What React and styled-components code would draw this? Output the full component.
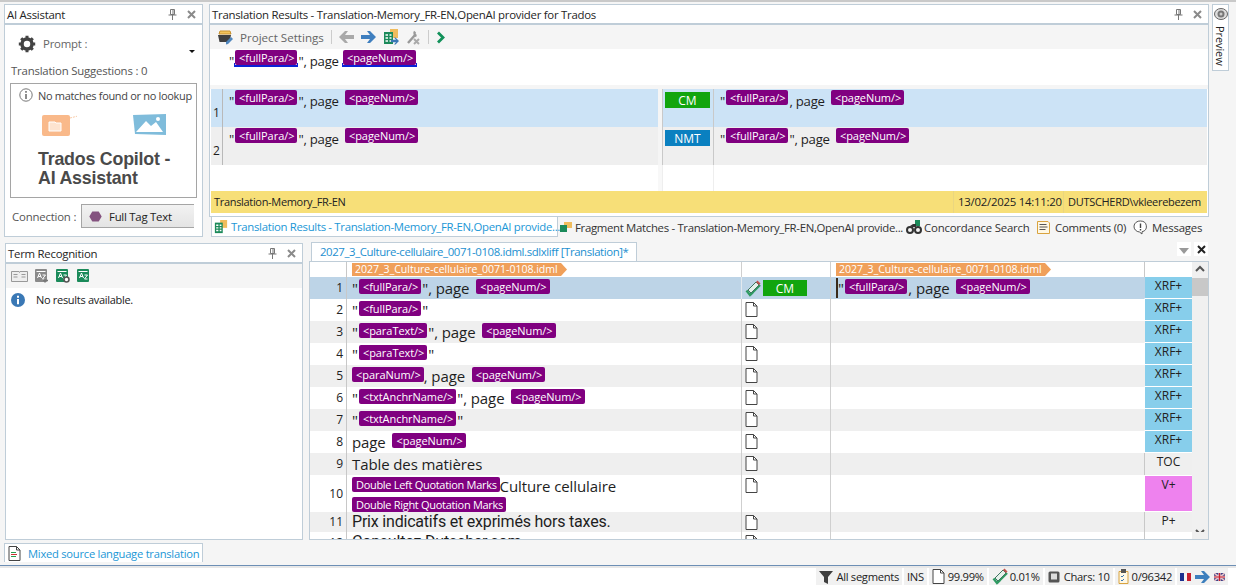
import React from "react";
import styled, { createGlobalStyle } from "styled-components";

const GlobalStyle = createGlobalStyle`
  html, body { margin: 0; padding: 0; overflow: hidden; }
  body { background: #f5f5f5; font-family: "Noto Sans", "Open Sans", sans-serif; color: #1e1e1e; }
  * { box-sizing: border-box; }
`;

const FONT = `"Open Sans", "Noto Sans", sans-serif`;
const BORDER = "#bfcdd8";

const Page = styled.div`
  width: 1236px;
  height: 586px;
  display: flex;
  flex-direction: column;
  border-top: 2px solid #c9c9c9;
  overflow: hidden;
`;
const TopArea = styled.div`
  display: flex;
  height: 239px;
  padding: 2px 0 0 4px;
`;
const BottomArea = styled.div`
  display: flex;
  height: 299px;
  padding: 2px 0 0 5px;
`;
const Panel = styled.section`
  display: flex;
  flex-direction: column;
  width: ${({ $w }) => $w}px;
  height: ${({ $h }) => $h}px;
  border: 1px solid ${BORDER};
  background: #fff;
`;
const TitleBar = styled.header`
  display: flex;
  align-items: center;
  height: 18px;
  padding: 0 6px 0 2px;
  flex: none;
  background: #fff;
  border-bottom: 2px solid ${BORDER};
  font: 11.4px ${FONT};
  letter-spacing: -0.26px;
  color: #252525;
  box-sizing: content-box;
  span { flex: 1; white-space: nowrap; }
`;
const TitleIcons = styled.div`
  display: flex;
  gap: 10px;
  align-items: center;
`;

const PinIcon = () => (
  <svg width="9" height="11" viewBox="0 0 9 11" fill="none" stroke="#777">
    <path d="M2.500.5h4v5h-4zM5 1v4.500M.5 6h8M4.500 6v5" />
  </svg>
);
const CloseIcon = ({ color = "#8a8a8a", size = 9 }) => (
  <svg width={size} height={size} viewBox="0 0 9 9" stroke={color} strokeWidth="2">
    <path d="M1 1l7 7M8 1l-7 7" />
  </svg>
);
const PanelButtons = () => (
  <TitleIcons>
    <PinIcon />
    <CloseIcon />
  </TitleIcons>
);

/* AI assistant */
const AiBody = styled.div`
  flex: 1;
  padding: 0 5px;
  position: relative;
  font: 11.4px ${FONT};
  letter-spacing: -0.2px;
  color: #555;
`;
const PromptRow = styled.div`
  display: flex;
  align-items: center;
  gap: 7px;
  height: 34px;
  padding: 3px 0 0 8px;
  color: #666;
`;
const Caret = styled.i`
  position: absolute;
  top: 25px;
  right: 7px;
  border: 3px solid transparent;
  border-top: 3px solid #111;
`;
const SuggestLabel = styled.div`
  margin: 4px 0 0 1px;
  height: 16px;
  line-height: 16px;
  white-space: nowrap;
`;
const MatchBox = styled.div`
  margin-top: 4px;
  height: 115px;
  border: 1px solid #a5a5a5;
  overflow: hidden;
`;
const NoMatch = styled.div`
  display: flex;
  align-items: center;
  gap: 5px;
  height: 22px;
  padding-left: 8px;
  color: #444;
  white-space: nowrap;
  font-size: 11px;
  letter-spacing: -0.32px;
`;
const Art = styled.div`
  display: flex;
  justify-content: space-between;
  padding: 8px 28px 0;
  height: 32px;
`;
const Brand = styled.div`
  padding: 12px 0 0 27px;
  font: bold 17.8px/19px "Liberation Sans", sans-serif;
  color: #4a4a4a;
`;
const ConnectRow = styled.div`
  display: flex;
  align-items: center;
  justify-content: space-between;
  margin-top: 6px;
  height: 24px;
  padding: 0 3px 0 2px;
`;
const FullTagButton = styled.div`
  display: flex;
  align-items: center;
  gap: 7px;
  width: 113px;
  height: 24px;
  padding-left: 7px;
  border: 1px solid #a5a5a5;
  border-right: 0;
  background: linear-gradient(#f2f2f2, #e4e4e4);
  color: #222;
  letter-spacing: -0.25px;
`;

/* results */
const ResultsColumn = styled.div`
  display: flex;
  flex-direction: column;
  margin-left: 6px;
  width: 1000px;
`;
const Toolbar = styled.div`
  display: flex;
  align-items: center;
  height: 24px;
  flex: none;
  padding-left: ${({ $pad }) => $pad || 7}px;
  gap: 7px;
  background: #f5f5f5;
  font: 11.6px ${FONT};
  color: #666;
`;
const ToolSep = styled.i`
  width: 1px;
  height: 14px;
  background: #ccc;
`;
const SourceLine = styled.div`
  height: 36px;
  flex: none;
  padding: 1px 0 0 19px;
  background: #fff;
`;
const Tag = styled.span`
  display: inline-block;
  height: 15px;
  padding: 0 3px 0 4px;
  margin: ${({ $m }) => $m || "0 1px"};
  border-radius: 2px;
  background: #800080;
  color: #fff;
  font: 11px/15px ${FONT};
  letter-spacing: ${({ $ls }) => $ls ?? "-0.05px"};
  white-space: nowrap;
  vertical-align: top;
`;
const Underlined = styled.span`
  display: inline-block;
  height: 17px;
  padding: 0 1px;
  vertical-align: top;
  background:
    linear-gradient(#0a22d8, #0a22d8) left bottom / 100% 2px no-repeat,
    linear-gradient(#0a22d8, #0a22d8) left bottom / 1px 4px no-repeat,
    linear-gradient(#0a22d8, #0a22d8) right bottom / 1px 4px no-repeat;
`;
const Seg = styled.div`
  font: 13.2px/22px ${FONT};
  color: #1e1e1e;
  white-space: nowrap;
  height: 100%;
  letter-spacing: -0.25px;
`;
const EdSeg = styled(Seg)`
  font: ${({ $ff }) => ($ff ? `16px/${$ff}` : `15px/22px ${FONT}`)};
  letter-spacing: ${({ $ff }) => ($ff ? "-0.2px" : "-0.1px")};
  ${Tag} { margin-top: 2px; }
`;
const TwoLineSeg = styled(EdSeg)`
  padding-top: 1px;
  line-height: 20px;
  ${Tag} { margin-top: 1px; }
`;
const ResultGrid = styled.div`
  flex: 1;
  display: flex;
  flex-direction: column;
  padding: 4px 1px 3px 1px;
  background: linear-gradient(#f5f5f5 4px, #fff 4px);
`;
const ResultRow = styled.div`
  display: grid;
  grid-template-columns: 12px 435px 4px 52px 1fr;
  height: 38px;
  background: ${({ $sel }) => ($sel ? "#cce3f6" : "#efefef")};
`;
const ResultNum = styled.div`
  display: flex;
  align-items: flex-end;
  justify-content: center;
  padding-bottom: 6px;
  font: 12px ${FONT};
  border-right: 1px solid #b9b9b9;
`;
const ResultText = styled.div`
  padding: 1px 0 0 6px;
`;
const Gutter = styled.div`
  background: #f5f5f5;
`;
const Origin = styled.div`
  padding: 3px 0 0 2px;
  border-left: 1px solid #c9c9c9;
  border-right: 1px solid #c9c9c9;
`;
const Badge = styled.div`
  display: flex;
  align-items: center;
  justify-content: center;
  width: ${({ $w }) => $w || 45}px;
  height: 16px;
  background: ${({ $c }) => $c};
  color: #fff;
  font: 12px ${FONT};
`;
const Filler = styled.div`
  flex: 1;
  display: grid;
  grid-template-columns: 447px 4px 52px 1fr;
  > i:nth-child(2) { background: #f8f8f8; }
  > i:nth-child(3) { border-left: 1px solid #eee; border-right: 1px solid #eee; }
`;
const YellowBar = styled.div`
  display: flex;
  height: 22px;
  flex: none;
  background: #f7df78;
  font: 11.4px/22px ${FONT};
  letter-spacing: -0.25px;
  color: #222;
`;
const MemoryCell = styled.div`
  flex: 1;
  padding-left: 3px;
  font-size: 11px;
  letter-spacing: -0.32px;
`;
const YellowCell = styled.div`
  flex: none;
  width: ${({ $w }) => $w}px;
  padding-left: 4px;
  border-left: 1px solid #ead680;
  white-space: nowrap;
  ${({ $tight }) => $tight && "font-size: 11px; letter-spacing: -0.3px;"}
`;
const DockTabs = styled.div`
  display: flex;
  align-items: flex-start;
  height: 21px;
  margin-left: 2px;
  font: 11.4px ${FONT};
  letter-spacing: -0.32px;
  white-space: nowrap;
`;
const DockTab = styled.div`
  display: flex;
  align-items: center;
  flex: none;
  gap: ${({ $gap }) => $gap || 3}px;
  width: ${({ $w }) => $w}px;
  height: 20px;
  padding-left: ${({ $p }) => $p ?? 2}px;
  letter-spacing: ${({ $ls }) => $ls ?? "inherit"};
  ${({ $active }) =>
    $active
      ? `background:#fff;border:1px solid ${BORDER};border-top:0;color:#1c97d6;`
      : "color:#333;"}
`;
const PreviewTab = styled.div`
  margin-left: 3px;
  width: 17px;
  height: 67px;
  background: #fff;
  border: 1px solid ${BORDER};
  display: flex;
  flex-direction: column;
  align-items: center;
  padding-top: 3px;
  font: 11px ${FONT};
  letter-spacing: -0.1px;
  span { writing-mode: vertical-rl; margin-top: 6px; color: #222; }
`;

/* terms */
const TermBody = styled.div`
  flex: 1;
  background: #fff;
`;
const NoResults = styled.div`
  display: flex;
  align-items: center;
  gap: 11px;
  padding: 4px 0 0 5px;
  font: 11px ${FONT};
  letter-spacing: -0.3px;
  color: #222;
`;

/* editor */
const EditorColumn = styled.div`
  display: flex;
  flex-direction: column;
  margin: -2px 0 0 6px;
  width: 900px;
`;
const EditorTabs = styled.div`
  display: flex;
  align-items: flex-end;
  height: 20px;
  flex: none;
  padding-left: 2px;
  justify-content: space-between;
`;
const EditorTab = styled.div`
  width: 326px;
  height: 19px;
  background: #fff;
  border: 1px solid ${BORDER};
  border-bottom: 0;
  padding-left: 8px;
  font: 11.4px/18px ${FONT};
  letter-spacing: -0.4px;
  color: #1c8fd0;
  white-space: nowrap;
`;
const EditorActions = styled.div`
  display: flex;
  align-items: flex-start;
  height: 19px;
  gap: 3px;
  padding-right: 1px;
  div { width: 14px; height: 14px; background: #fff; display: flex; align-items: center; justify-content: center; }
`;
const DownTri = styled.i`
  margin-top: 4px;
  border: 5px solid transparent;
  border-top: 6px solid #999;
  border-bottom: 0;
`;
const Editor = styled.div`
  position: relative;
  flex: 1;
  min-height: 0;
  border: 1px solid ${BORDER};
  background: #fff;
  overflow: hidden;
`;
const EdRow = styled.div`
  display: grid;
  grid-template-columns: 37px 390px 4px 90px 313px 48px 16px;
  height: ${({ $h }) => $h || 22}px;
  background: ${({ $bg }) => $bg};
`;
const NumBlank = styled.i`
  border-right: 1px solid #c8c8c8;
`;
const EdNum = styled.div`
  font: 12px/${({ $lh }) => $lh || 22}px ${FONT};
  text-align: right;
  padding-right: 3px;
  border-right: 1px solid #c8c8c8;
  color: #222;
`;
const EdText = styled.div`
  padding-left: 5px;
  overflow: hidden;
`;
const EdState = styled.div`
  display: flex;
  align-items: flex-start;
  gap: 1px;
  padding: 3px 0 0 3px;
  border-left: 1px solid ${({ $soft }) => ($soft ? "#e3e9ef" : "#cfcfcf")};
  border-right: 1px solid #cfcfcf;
`;
const EdTarget = styled.div`
  padding-left: 7px;
  position: relative;
`;
const Caretbar = styled.i`
  position: absolute;
  left: 5px;
  top: 1px;
  width: 2px;
  height: 20px;
  background: #3a2a1a;
`;
const StructCell = styled.div`
  font: 12px/17px ${FONT};
  text-align: center;
  color: #222;
  background: ${({ $bg }) => $bg || "transparent"};
  border-bottom: ${({ $bg }) => ($bg ? "1px solid #fff" : "0")};
  border-left: 1px solid ${({ $bg }) => ($bg ? "transparent" : "#c8c8c8")};
  background-clip: padding-box;
  margin-top: ${({ $top }) => $top || 0}px;
`;
const Scrollbar = styled.div`
  background: #f0f0f0;
  position: relative;
`;
const DocArrow = styled.div`
  height: 13px;
  width: 215px;
  margin: 1px 0 0 ${({ $ml }) => $ml || 0}px;
  padding-left: 3px;
  background: #f0a05a;
  color: #fff;
  font: 10.6px/13px ${FONT};
  letter-spacing: -0.05px;
  white-space: nowrap;
  overflow: hidden;
  clip-path: polygon(0 0, calc(100% - 6px) 0, 100% 50%, calc(100% - 6px) 100%, 0 100%);
`;
const ScrollArrow = styled.svg`
  position: absolute;
  left: 3px;
  top: ${({ $top }) => $top}px;
`;
const Thumb = styled.div`
  height: 18px;
  margin-top: 1px;
  background: #c8c8c8;
`;

/* bottom bars */
const BottomTabRow = styled.div`
  height: 25px;
  padding: 3px 0 0 4px;
  flex: none;
`;
const BottomTab = styled.div`
  display: flex;
  align-items: center;
  gap: 7px;
  width: 199px;
  height: 19px;
  padding-left: 3px;
  background: #fff;
  border: 1px solid ${BORDER};
  border-bottom: 0;
  color: #1c97d6;
  font: 11.2px ${FONT};
  letter-spacing: -0.25px;
  white-space: nowrap;
`;
const StatusBar = styled.footer`
  display: flex;
  justify-content: flex-end;
  flex: 1;
  border-top: 1px solid #6d8fb5;
  background: linear-gradient(#e8e8e8 2px, #fff 2px);
  padding: 2px 8px 1px 0;
  font: 11.2px ${FONT};
  letter-spacing: -0.3px;
  color: #222;
`;
const StatusCell = styled.div`
  display: flex;
  align-items: center;
  gap: ${({ $gap }) => $gap || 3}px;
  padding: 0 3px;
  background: #f1f1f1;
  border-left: 2px solid #fff;
  white-space: nowrap;
`;

/* drawings */
const Svg = ({ w = 16, h = 16, vb, children }) => (
  <svg width={w} height={h} viewBox={vb || `0 0 ${w} ${h}`} style={{ flex: "none" }}>
    {children}
  </svg>
);
const PageIcon = ({ lines }) => (
  <Svg w={13} h={15}>
    <path d="M1 .5h7.500l3.500 3.500v10.500H1z" fill="#fff" stroke="#444" />
    <path d="M8.500.5V4H12" fill="none" stroke="#444" />
    {lines && (
      <>
        <path d="M3 6.500h5" stroke="#2a9d4e" />
        <path d="M3 8.500h6" stroke="#c33" />
        <path d="M3 10.500h5" stroke="#2a9d4e" />
      </>
    )}
  </Svg>
);
const Gear = () => (
  <Svg w={18} h={18}>
    <circle cx="9" cy="9" r="5" fill="none" stroke="#444" strokeWidth="3.500" />
    <path d="M9 .8v3M9 14.200v3M.8 9h3M14.200 9h3M3.200 3.200l2.200 2.200M12.600 12.600l2.200 2.200M14.800 3.200l-2.200 2.200M5.400 12.600l-2.200 2.200" stroke="#444" strokeWidth="3" />
  </Svg>
);
const InfoOutline = () => (
  <Svg w={14} h={14}>
    <circle cx="7" cy="7" r="6.200" fill="#fff" stroke="#777" />
    <path d="M7 3v1.700M7 6v5" stroke="#666" strokeWidth="1.500" />
  </Svg>
);
const InfoFilled = () => (
  <Svg w={14} h={14}>
    <circle cx="7" cy="7" r="7" fill="#3a78b5" />
    <path d="M7 2.800v2M7 6v5.200" stroke="#fff" strokeWidth="2" />
  </Svg>
);
const Hexagon = () => (
  <Svg w={13} h={11}>
    <path d="M3.300.5h6.400l3 5-3 5H3.300l-3-5z" fill="#84527f" />
  </Svg>
);
const FolderArt = () => (
  <Svg w={38} h={24}>
    <rect x="3" y="1" width="28" height="21" rx="2" fill="#f9b98a" />
    <path d="M10 8h6l1 1h5v8H10z" fill="#fde4d0" stroke="#fff" />
    <path d="M31 4l8-2" stroke="#f9cba8" strokeDasharray="2 1" />
  </Svg>
);
const PictureArt = () => (
  <Svg w={40} h={24}>
    <path d="M5 1l33-1v21l-31-1z" fill="#7fbcdb" />
    <path d="M8 18l10-11 5 5 5-4 7 10z" fill="#fff" />
    <circle cx="30" cy="5" r="2" fill="#fff" />
  </Svg>
);
const ProjectIcon = () => (
  <Svg w={16} h={16}>
    <path d="M3 2h10l1 3H2z" fill="#f2c45c" stroke="#c8912e" />
    <path d="M1 6h13l-1.500 7H2.500z" fill="#404040" />
    <path d="M9 13l5-5 2 2-5 5-2 .5z" fill="#4f86bd" />
  </Svg>
);
const ArrowIcon = ({ color, left }) => (
  <Svg w={15} h={12}>
    <path
      d={left ? "M0 6L6 0h3L6 4h9v4H6l3 4H6z" : "M15 6L9 0H6l3 4H0v4h9l-3 4h3z"}
      fill={color}
    />
  </Svg>
);
const SheetIcon = ({ arrow, w = 16 }) => (
  <Svg w={w} h={w} vb="0 0 16 16">
    <path d="M7 0h8v9H7z" fill="#f0bd5d" />
    <path d="M1 3h9v12H1z" fill="#1b8a5a" />
    <path d="M2.500 6H5M6.500 6h2M2.500 9H5M6.500 9h2M2.500 12H5M6.500 12h2" stroke="#fff" strokeWidth="1.500" />
    {arrow && <path d="M16 12l-3.500-3.500H11l2 2.300H8v2.400h5l-2 2.300h1.500z" fill="#3b78b5" />}
  </Svg>
);
const WrenchIcon = () => (
  <Svg w={15} h={16}>
    <path d="M2 14l7-8M9 2.500a3 3 0 0 0 1.500 4.500" fill="none" stroke="#999" strokeWidth="2.400" />
    <path d="M8 10l5 5M13 10l-5 5" stroke="#aaa" strokeWidth="2" />
  </Svg>
);
const GreenChevron = () => (
  <Svg w={10} h={13}>
    <path d="M2 1.500L7 6.500l-5 5" fill="none" stroke="#12915a" strokeWidth="2.800" />
  </Svg>
);
const FragmentIcon = () => (
  <Svg w={12} h={10}>
    <rect x="4" y="0" width="8" height="6" fill="#f0bd5d" />
    <rect x="0" y="3" width="7" height="7" fill="#1b8a5a" />
  </Svg>
);
const BinocIcon = () => (
  <Svg w={16} h={14}>
    <path d="M9 0h5v6H9z" fill="#1b8a5a" />
    <circle cx="4" cy="10" r="3" fill="none" stroke="#333" strokeWidth="2" />
    <circle cx="12" cy="10" r="3" fill="none" stroke="#333" strokeWidth="2" />
    <path d="M4 6l3-2h3v3H6z" fill="#333" />
  </Svg>
);
const CommentsIcon = () => (
  <Svg w={13} h={13}>
    <path d="M.5.5h10.500l1.500 1.500v10.500H.5z" fill="#fff8e5" stroke="#d9a33f" />
    <path d="M2.500 3.500h7M2.500 6h8M2.500 8.500h6" stroke="#555" />
  </Svg>
);
const MessageIcon = () => (
  <Svg w={15} h={15}>
    <path d="M7.500 1a6 5.500 0 0 1 1.500 10.800L9 14 6.500 12A6 5.500 0 0 1 7.500 1z" fill="#fff" stroke="#555" />
    <path d="M7.500 3.500v4.500M7.500 9v1.500" stroke="#444" strokeWidth="1.400" />
  </Svg>
);
const EyeIcon = () => (
  <Svg w={14} h={12}>
    <ellipse cx="7" cy="6" rx="6.500" ry="5.500" fill="#ddd" stroke="#666" />
    <circle cx="7" cy="6" r="3.500" fill="#777" />
    <circle cx="7" cy="6" r="1.500" fill="#ccc" />
  </Svg>
);
const BookIcon = () => (
  <Svg w={17} h={13}>
    <path d="M.5 1.500h7.500l.5 1 .5-1h7.500v10H.5z" fill="#eee" stroke="#999" />
    <path d="M2.500 4.500h4M2.500 7h4M10.500 4.500h4M10.500 7h4" stroke="#999" />
  </Svg>
);
const TermTile = ({ color, extra }) => (
  <Svg w={14} h={14}>
    <rect x="0" y="0" width="12" height="13" rx="1" fill={color} />
    <path d="M1.500 2.500h9" stroke="#fff" />
    <path d="M2.500 9l2-5 2 5M3.300 7.500h2.500M7.500 6h3l-3 4h3" fill="none" stroke="#fff" />
    {extra === "plus" && <path d="M10 9.500v4M8 11.500h5" stroke="#777" strokeWidth="1.600" />}
    {extra === "gear" && <circle cx="10.500" cy="10.500" r="2.500" fill="#fff" stroke="#555" strokeWidth="1.600" />}
  </Svg>
);
const PencilCheck = () => (
  <Svg w={17} h={17}>
    <path d="M1.500 10.500l3.500 4.500 3-3" fill="none" stroke="#2f9a62" strokeWidth="2.400" />
    <path d="M5 15L15 5" stroke="#2f9a62" strokeWidth="2.400" />
    <path d="M3 10l8-8 3 3-8 8z" fill="#e4f0ea" stroke="#3f7560" />
    <path d="M11 2l1.500-1.500 3 3L14 5z" fill="#c0504d" />
  </Svg>
);
const FunnelIcon = () => (
  <Svg w={14} h={14}>
    <path d="M0 1h14L9 7v7l-4-2V7z" fill="#3f3f3f" />
  </Svg>
);
const KeyIcon = () => (
  <Svg w={12} h={12}>
    <rect x=".5" y=".5" width="11" height="11" rx="1.500" fill="#555" />
    <rect x="3" y="2.500" width="6" height="6" fill="#ddd" />
  </Svg>
);
const ClipIcon = () => (
  <Svg w={11} h={15}>
    <path d="M1 2.500h9v12H1z" fill="#fff8e5" stroke="#d9a33f" />
    <rect x="3" y="0" width="5" height="4" fill="#555" />
    <path d="M3 7l1 1 2-2M3 11l1 1 2-2" fill="none" stroke="#3b78b5" />
  </Svg>
);
const FlagPair = () => (
  <>
    <Svg w={11} h={8}>
      <rect width="4" height="8" fill="#1b2f8f" />
      <rect x="4" width="3" height="8" fill="#f4f4f4" />
      <rect x="7" width="4" height="8" fill="#c8202f" />
    </Svg>
    <Svg w={15} h={12}>
      <path d="M15 6L9 0H6l3 4H0v4h9l-3 4h3z" fill="#3d7fbd" />
    </Svg>
    <Svg w={11} h={8}>
      <rect width="11" height="8" fill="#3b3f86" />
      <path d="M0 0l11 8M11 0L0 8" stroke="#e9c3c8" strokeWidth="1.500" />
      <path d="M5.500 0v8M0 4h11" stroke="#e9c3c8" strokeWidth="2.400" />
      <path d="M5.500 0v8M0 4h11" stroke="#c8202f" strokeWidth="1.200" />
    </Svg>
  </>
);

const fullPara = "<fullPara/>";
const pageNum = "<pageNum/>";
const paraText = "<paraText/>";
const paraNum = "<paraNum/>";
const anchor = "<txtAnchrName/>";
const GAP = "0 0 0 3px";

const rows = [
  { n: 2, body: <>"<Tag>{fullPara}</Tag>"</>, tag: "XRF+" },
  { n: 3, body: <>"<Tag>{paraText}</Tag>", page <Tag $m={GAP}>{pageNum}</Tag></>, tag: "XRF+" },
  { n: 4, body: <>"<Tag>{paraText}</Tag>"</>, tag: "XRF+" },
  { n: 5, body: <><Tag $m="0">{paraNum}</Tag>, page <Tag $m={GAP}>{pageNum}</Tag></>, tag: "XRF+" },
  { n: 6, body: <>"<Tag>{anchor}</Tag>", page <Tag $m={GAP}>{pageNum}</Tag></>, tag: "XRF+" },
  { n: 7, body: <>"<Tag>{anchor}</Tag>"</>, tag: "XRF+" },
  { n: 8, body: <>page <Tag $m={GAP}>{pageNum}</Tag></>, tag: "XRF+" },
  { n: 9, body: <>Table des matières</>, tag: "TOC" },
];

export default function App() {
  return (
    <Page>
      <GlobalStyle />
      <TopArea>
        <Panel $w={199} $h={233}>
          <TitleBar>
            <span>AI Assistant</span>
            <PanelButtons />
          </TitleBar>
          <AiBody>
            <PromptRow>
              <Gear />
              Prompt :
            </PromptRow>
            <Caret />
            <SuggestLabel>Translation Suggestions : 0</SuggestLabel>
            <MatchBox>
              <NoMatch>
                <InfoOutline />
                No matches found or no lookup
              </NoMatch>
              <Art>
                <FolderArt />
                <PictureArt />
              </Art>
              <Brand>
                Trados Copilot -
                <br />
                AI Assistant
              </Brand>
            </MatchBox>
            <ConnectRow>
              Connection :
              <FullTagButton>
                <Hexagon />
                Full Tag Text
              </FullTagButton>
            </ConnectRow>
          </AiBody>
        </Panel>
        <ResultsColumn>
          <Panel $w={1000} $h={213}>
            <TitleBar>
              <span>Translation Results - Translation-Memory_FR-EN,OpenAI provider for Trados</span>
              <PanelButtons />
            </TitleBar>
            <Toolbar>
              <ProjectIcon />
              <span>Project Settings</span>
              <ToolSep />
              <ArrowIcon color="#a9a9a9" left />
              <ArrowIcon color="#3f7fbf" />
              <SheetIcon arrow />
              <WrenchIcon />
              <ToolSep />
              <GreenChevron />
            </Toolbar>
            <SourceLine>
              <Seg>
                "<Underlined><Tag $m="0">{fullPara}</Tag></Underlined>", page <Underlined><Tag $m="0">{pageNum}</Tag></Underlined>
              </Seg>
            </SourceLine>
            <ResultGrid>
              <ResultRow $sel>
                <ResultNum>1</ResultNum>
                <ResultText>
                  <Seg>"<Tag>{fullPara}</Tag>", page <Tag $m={GAP}>{pageNum}</Tag></Seg>
                </ResultText>
                <Gutter />
                <Origin><Badge $c="#12a50e">CM</Badge></Origin>
                <ResultText>
                  <Seg>"<Tag>{fullPara}</Tag>, page <Tag $m={GAP}>{pageNum}</Tag></Seg>
                </ResultText>
              </ResultRow>
              <ResultRow>
                <ResultNum>2</ResultNum>
                <ResultText>
                  <Seg>"<Tag>{fullPara}</Tag>", page <Tag $m={GAP}>{pageNum}</Tag></Seg>
                </ResultText>
                <Gutter />
                <Origin><Badge $c="#0a80c0">NMT</Badge></Origin>
                <ResultText>
                  <Seg>"<Tag>{fullPara}</Tag>", page <Tag $m={GAP}>{pageNum}</Tag></Seg>
                </ResultText>
              </ResultRow>
              <Filler><i /><i /><i /><i /></Filler>
              <YellowBar>
                <MemoryCell>Translation-Memory_FR-EN</MemoryCell>
                <YellowCell $w={110}>13/02/2025 14:11:20</YellowCell>
                <YellowCell $w={144} $tight>DUTSCHERD\vkleerebezem</YellowCell>
              </YellowBar>
            </ResultGrid>
          </Panel>
          <DockTabs>
            <DockTab $active $w={347}>
              <SheetIcon w={14} />
              Translation Results - Translation-Memory_FR-EN,OpenAI provide...
            </DockTab>
            <DockTab $w={347}>
              <FragmentIcon />
              Fragment Matches - Translation-Memory_FR-EN,OpenAI provide...
            </DockTab>
            <DockTab $w={131} $p={1} $gap={2} $ls="-0.2px">
              <BinocIcon />
              Concordance Search
            </DockTab>
            <DockTab $w={96} $p={1} $gap={5} $ls="-0.25px">
              <CommentsIcon />
              Comments (0)
            </DockTab>
            <DockTab $w={75} $p={1} $gap={4} $ls="-0.2px">
              <MessageIcon />
              Messages
            </DockTab>
          </DockTabs>
        </ResultsColumn>
        <PreviewTab>
          <EyeIcon />
          <span>Preview</span>
        </PreviewTab>
      </TopArea>

      <BottomArea>
        <Panel $w={298} $h={297}>
          <TitleBar>
            <span>Term Recognition</span>
            <PanelButtons />
          </TitleBar>
          <Toolbar $pad={5}>
            <BookIcon />
            <TermTile color="#8a8a8a" extra="plus" />
            <TermTile color="#1b8a5a" extra="gear" />
            <TermTile color="#1b8a5a" />
          </Toolbar>
          <TermBody>
            <NoResults>
              <InfoFilled />
              No results available.
            </NoResults>
          </TermBody>
        </Panel>
        <EditorColumn>
          <EditorTabs>
            <EditorTab>2027_3_Culture-cellulaire_0071-0108.idml.sdlxliff [Translation]*</EditorTab>
            <EditorActions>
              <div><DownTri /></div>
              <div><CloseIcon color="#222" size={9} /></div>
            </EditorActions>
          </EditorTabs>
          <Editor>
            <EdRow $h={15}>
              <NumBlank />
              <EdText><DocArrow>2027_3_Culture-cellulaire_0071-0108.idml</DocArrow></EdText>
              <i />
              <EdState />
              <EdTarget><DocArrow $ml={-2}>2027_3_Culture-cellulaire_0071-0108.idml</DocArrow></EdTarget>
              <StructCell />
              <Scrollbar>
                <ScrollArrow $top={3} width="10" height="7" viewBox="0 0 10 7" fill="none" stroke="#555" strokeWidth="2">
                  <path d="M1 6l4-4 4 4" />
                </ScrollArrow>
              </Scrollbar>
            </EdRow>
            <EdRow $bg="#bdd4e7">
              <EdNum>1</EdNum>
              <EdText>
                <EdSeg>"<Tag>{fullPara}</Tag>", page <Tag $m={GAP}>{pageNum}</Tag></EdSeg>
              </EdText>
              <i />
              <EdState $soft>
                <PencilCheck />
                <Badge $c="#12a50e" $w={44}>CM</Badge>
              </EdState>
              <EdTarget>
                <Caretbar />
                <EdSeg>"<Tag>{fullPara}</Tag>, page <Tag $m={GAP}>{pageNum}</Tag></EdSeg>
              </EdTarget>
              <StructCell $bg="#87ceeb">XRF+</StructCell>
              <Scrollbar><Thumb /></Scrollbar>
            </EdRow>
            {rows.map(({ n, body, tag }) => (
              <EdRow key={n} $bg={n % 2 ? "#efefef" : "#fff"}>
                <EdNum>{n}</EdNum>
                <EdText><EdSeg>{body}</EdSeg></EdText>
                <i />
                <EdState><PageIcon /></EdState>
                <EdTarget />
                <StructCell $bg={tag === "XRF+" ? "#87ceeb" : undefined}>{tag}</StructCell>
                <Scrollbar />
              </EdRow>
            ))}
            <EdRow $h={37} $bg="#fff">
              <EdNum $lh={37}>10</EdNum>
              <EdText>
                <TwoLineSeg>
                  <Tag $m="0" $ls="-0.3px">Double Left Quotation Marks</Tag>Culture cellulaire
                  <br />
                  <Tag $m="0" $ls="-0.3px">Double Right Quotation Marks</Tag>
                </TwoLineSeg>
              </EdText>
              <i />
              <EdState><PageIcon /></EdState>
              <EdTarget />
              <StructCell $bg="#ee82ee" $top={1}>V+</StructCell>
              <Scrollbar />
            </EdRow>
            <EdRow $h={20} $bg="#efefef">
              <EdNum $lh={20}>11</EdNum>
              <EdText><EdSeg $ff="20px Roboto, sans-serif">Prix indicatifs et exprimés hors taxes.</EdSeg></EdText>
              <i />
              <EdState><PageIcon /></EdState>
              <EdTarget />
              <StructCell>P+</StructCell>
              <Scrollbar>
                <ScrollArrow $top={17} width="10" height="7" viewBox="0 0 10 7" fill="none" stroke="#555" strokeWidth="2">
                  <path d="M1 1l4 4 4-4" />
                </ScrollArrow>
              </Scrollbar>
            </EdRow>
            <EdRow $bg="#fff">
              <EdNum>12</EdNum>
              <EdText><EdSeg $ff="20px Roboto, sans-serif">Consultez Dutscher.com</EdSeg></EdText>
              <i />
              <EdState><PageIcon /></EdState>
              <EdTarget />
              <StructCell />
              <Scrollbar />
            </EdRow>
          </Editor>
        </EditorColumn>
      </BottomArea>

      <BottomTabRow>
        <BottomTab>
          <PageIcon lines />
          Mixed source language translation
        </BottomTab>
      </BottomTabRow>
      <StatusBar>
        <StatusCell><FunnelIcon />All segments</StatusCell>
        <StatusCell>INS</StatusCell>
        <StatusCell><PageIcon />99.99%</StatusCell>
        <StatusCell $gap={1}><PencilCheck />0.01%</StatusCell>
        <StatusCell $gap={4}><KeyIcon />Chars: 10</StatusCell>
        <StatusCell><ClipIcon />0/96342</StatusCell>
        <StatusCell $gap={4}><FlagPair /></StatusCell>
      </StatusBar>
    </Page>
  );
}
